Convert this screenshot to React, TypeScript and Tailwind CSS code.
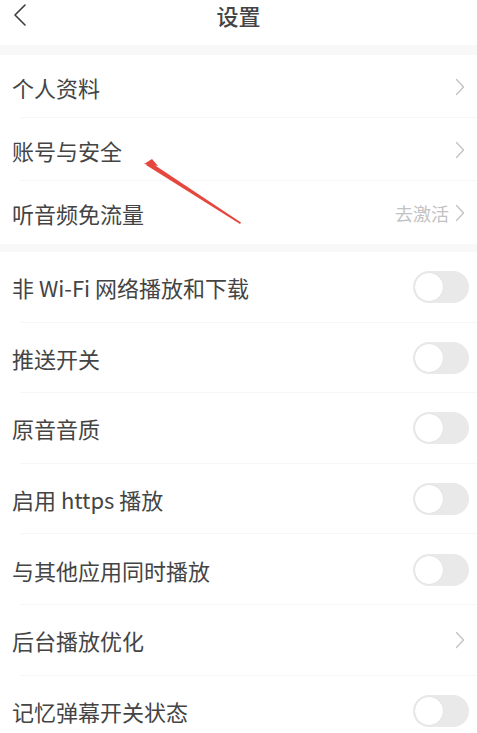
const FONT = { fontFamily: '"Noto Sans CJK SC", "Noto Sans", sans-serif' }

type Row = { label: string; kind: 'link' | 'toggle'; extra?: string }

const GROUP_ONE: Row[] = [
  { label: '个人资料', kind: 'link' },
  { label: '账号与安全', kind: 'link' },
  { label: '听音频免流量', kind: 'link', extra: '去激活' },
]

const GROUP_TWO: Row[] = [
  { label: '非 Wi-Fi 网络播放和下载', kind: 'toggle' },
  { label: '推送开关', kind: 'toggle' },
  { label: '原音音质', kind: 'toggle' },
  { label: '启用 https 播放', kind: 'toggle' },
  { label: '与其他应用同时播放', kind: 'toggle' },
  { label: '后台播放优化', kind: 'link' },
  { label: '记忆弹幕开关状态', kind: 'toggle' },
]

function Chevron() {
  return (
    <svg width="10" height="18" viewBox="0 0 10 18" fill="none" className="shrink-0">
      <path d="M1.5 1.5 L8.5 9 L1.5 16.5" stroke="#c4c4c4" strokeWidth="1.4" strokeLinecap="round" strokeLinejoin="round" />
    </svg>
  )
}

function Toggle() {
  return (
    <div className="w-[56px] h-[32px] rounded-full bg-[#e9e9e9] p-[2px] flex items-center">
      <div className="w-[28px] h-[28px] rounded-full bg-white shadow-[0_0_1px_rgba(0,0,0,0.15)]" />
    </div>
  )
}

function SettingRow({ row, height, last }: { row: Row; height: string; last: boolean }) {
  return (
    <div className={`${height} flex items-center pl-[12px] pr-[8px] relative`}>
      <span className="flex-1 text-[22px] text-[#444] leading-none">{row.label}</span>
      {row.extra && <span className="text-[18px] text-[#c2c2c2] mr-[6px] leading-none">{row.extra}</span>}
      {row.kind === 'link' ? <div className="pr-[4px]"><Chevron /></div> : <Toggle />}
      {!last && <div className="absolute left-[20px] right-0 bottom-0 h-px bg-[#f6f6f6]" />}
    </div>
  )
}

export default function App() {
  return (
    <div className="w-[477px] h-[733px] bg-white overflow-hidden relative" style={FONT}>
      {/* Header */}
      <div className="h-[45px] flex items-start px-[12px] relative">
        <div className="h-[30px] flex items-center">
          <svg width="16" height="24" viewBox="0 0 16 24" fill="none">
            <path d="M13 2 L3 12 L13 22" stroke="#3a3a3a" strokeWidth="1.6" strokeLinecap="round" strokeLinejoin="round" />
          </svg>
        </div>
        <h1 className="absolute left-0 right-0 top-0 text-center text-[22px] font-medium text-[#444] leading-[30px]">设置</h1>
      </div>

      <div className="h-[10px] bg-[#f8f8f8]" />

      {GROUP_ONE.map((r, i) => (
        <SettingRow key={r.label} row={r} height="h-[63px]" last={i === GROUP_ONE.length - 1} />
      ))}

      <div className="h-[8px] bg-[#f8f8f8]" />

      {GROUP_TWO.map((r, i) => (
        <SettingRow key={r.label} row={r} height="h-[70.6px]" last={i === GROUP_TWO.length - 1} />
      ))}

      {/* annotation arrow */}
      <svg className="absolute left-0 top-0 pointer-events-none" width="477" height="733">
        <polygon points="146,165 240,224 241,222.5 150,162" fill="#e5473c" />
        <polygon points="144,164 158,166 152,159" fill="#e5473c" />
      </svg>
    </div>
  )
}
